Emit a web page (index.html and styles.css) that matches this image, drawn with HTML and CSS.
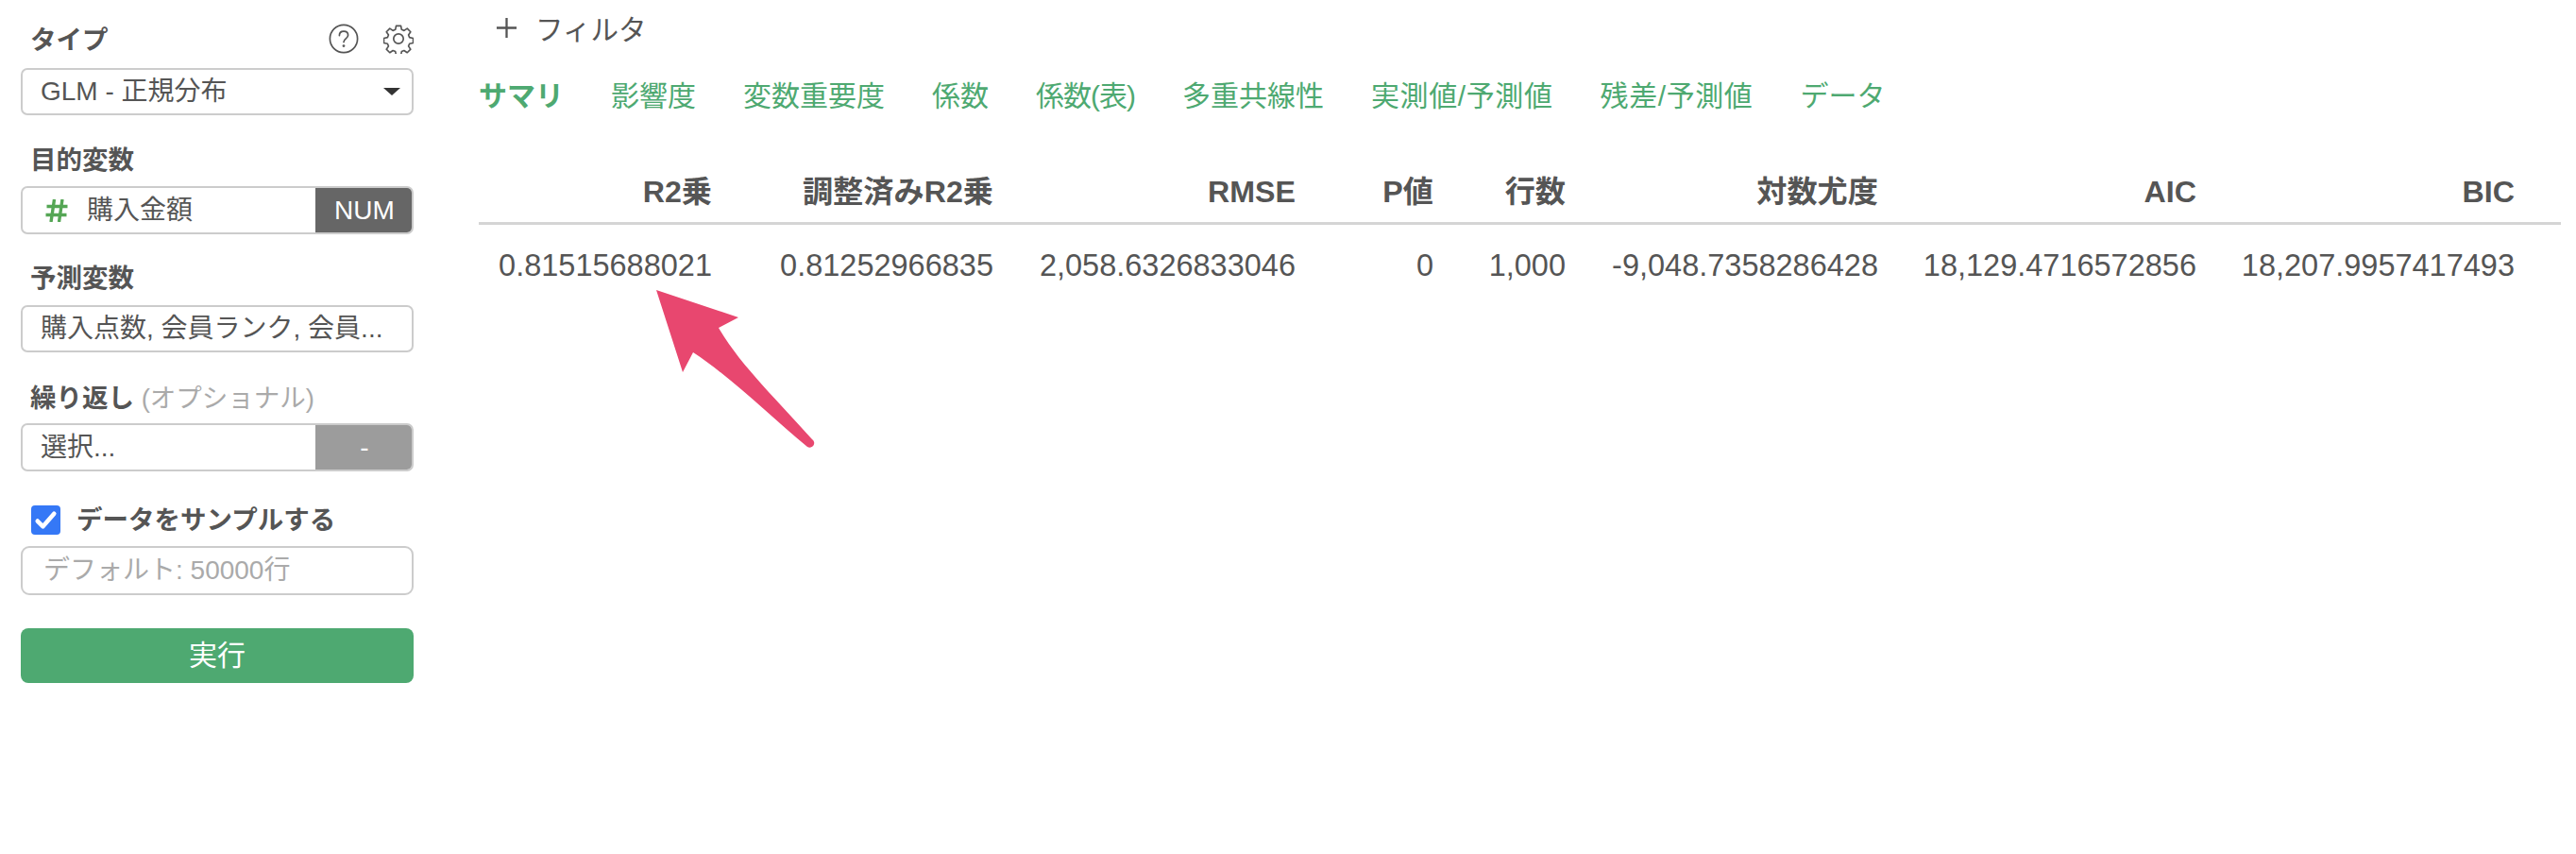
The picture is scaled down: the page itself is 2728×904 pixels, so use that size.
FILE: index.html
```html
<!DOCTYPE html>
<html lang="ja">
<head>
  <meta charset="UTF-8" />
  <title>GLM サマリ</title>
  <link rel="stylesheet" href="styles.css">
</head>
<body>

  <!-- Sidebar -->
  <aside class="sidebar">
    <div class="label-row">
      <span class="label">タイプ</span>
      <span class="tools">
        <svg class="icon" viewBox="0 0 32 32" fill="none" stroke="#555" stroke-width="1.7" stroke-linecap="round">
          <circle cx="16" cy="16" r="14.6" />
          <path d="M11.4 12.6c0-2.8 2-4.4 4.6-4.4s4.6 1.6 4.6 4c0 3.6-4.6 3.6-4.6 7.2" />
          <circle cx="16" cy="23.6" r="0.6" fill="#555" />
        </svg>
        <svg class="icon" viewBox="0 0 32 32" fill="none" stroke="#555" stroke-width="1.7" stroke-linejoin="round">
          <path d="M13.4 2h5.2l.8 4 2.7 1.1 3.4-2.3 3.7 3.7-2.3 3.4 1.1 2.7 4 .8v5.2l-4 .8-1.1 2.7 2.3 3.4-3.7 3.7-3.4-2.3-2.7 1.1-.8 4h-5.2l-.8-4-2.7-1.1-3.4 2.3-3.7-3.7 2.3-3.4-1.1-2.7-4-.8v-5.2l4-.8 1.1-2.7-2.3-3.4 3.7-3.7 3.4 2.3 2.7-1.1z" transform="translate(.5 .5) scale(.97)" />
          <circle cx="16" cy="16" r="5.2" />
        </svg>
      </span>
    </div>
    <div class="field select">
      <span class="value">GLM - 正規分布</span>
      <span class="caret"></span>
    </div>

    <div class="label target-label">目的変数</div>
    <div class="field has-badge">
      <svg class="hash" viewBox="0 0 24 24" fill="none" stroke="#55a655" stroke-width="3.4">
        <path d="M9.5 0L6 24M18 0l-3.500 24M1.500 7.500h22M0.500 16.500h22" />
      </svg>
      <span class="value">購入金額</span>
      <span class="badge">NUM</span>
    </div>

    <div class="label predict-label">予測変数</div>
    <div class="field">
      <span class="value">購入点数, 会員ランク, 会員...</span>
    </div>

    <div class="label repeat-label">繰り返し <span class="optional">(オプショナル)</span></div>
    <div class="field has-badge">
      <span class="value">選択...</span>
      <span class="badge badge-off">-</span>
    </div>

    <label class="label sample">
      <span class="checkbox">
        <svg viewBox="0 0 30 30" fill="none" stroke="#fff" stroke-width="4.4" stroke-linecap="round" stroke-linejoin="round">
          <path d="M6.5 16l5.600 5.600L23.500 8.500" />
        </svg>
      </span>
      データをサンプルする
    </label>
    <div class="field sample-input">
      <span class="placeholder">デフォルト: 50000行</span>
    </div>

    <div class="run">実行</div>
  </aside>

  <!-- Main -->
  <main class="content">
    <div class="filter">
      <svg class="plus" viewBox="0 0 24 24" stroke="#555" stroke-width="2.4">
        <path d="M12 1v22M1 12h22" />
      </svg>
      フィルタ
    </div>

    <nav class="tabs">
      <span class="tab active">サマリ</span>
      <span class="tab">影響度</span>
      <span class="tab">変数重要度</span>
      <span class="tab">係数</span>
      <span class="tab tab-tight">係数(表)</span>
      <span class="tab">多重共線性</span>
      <span class="tab tab-loose">実測値/予測値</span>
      <span class="tab tab-loose">残差/予測値</span>
      <span class="tab">データ</span>
    </nav>

    <table class="summary">
      <colgroup>
        <col class="c-r2">
        <col class="c-adj">
        <col class="c-rmse">
        <col class="c-p">
        <col class="c-rows">
        <col class="c-log">
        <col class="c-ic">
        <col class="c-ic">
        <col class="c-end">
      </colgroup>
      <thead>
        <tr>
          <th>R2乗</th>
          <th>調整済みR2乗</th>
          <th>RMSE</th>
          <th>P値</th>
          <th>行数</th>
          <th>対数尤度</th>
          <th>AIC</th>
          <th>BIC</th>
          <th></th>
        </tr>
      </thead>
      <tbody>
        <tr>
          <td>0.81515688021</td>
          <td>0.81252966835</td>
          <td>2,058.6326833046</td>
          <td>0</td>
          <td>1,000</td>
          <td>-9,048.7358286428</td>
          <td>18,129.4716572856</td>
          <td>18,207.9957417493</td>
          <td></td>
        </tr>
      </tbody>
    </table>
  </main>

  <!-- Annotation arrow -->
  <svg class="arrow" viewBox="0 0 180 180">
    <path d="M5 7L92 36 71 47C95 88 135 125 170 165a3.600 3.600 0 0 1-5 8C125 140 85 100 44 73L33 94z" fill="#e8476f" />
  </svg>

</body>
</html>
```

FILE: styles.css
```css
html, body {
  margin: 0;
  padding: 0;
  height: 100%;
  background: #fff;
}

body {
  display: flex;
  overflow: hidden;
  position: relative;
  color: #555;
  font-family: "Liberation Sans", "Noto Sans CJK JP", sans-serif;
  font-size: 28px;
}

.sidebar {
  width: 416px;
  padding: 21px 69px 0 22px;
  flex: none;
  display: flex;
  flex-direction: column;
}

.label {
  display: block;
  height: 40px;
  line-height: 43px;
  margin-left: 10px;
  font-weight: bold;
  font-size: 27.5px;
  white-space: nowrap;
}

.label-row {
  display: flex;
  justify-content: space-between;
  align-items: center;
  height: 40px;
  margin-bottom: 11px;
}

.tools {
  display: flex;
  gap: 26px;
}

.icon {
  width: 32px;
  height: 32px;
  display: block;
}

.field {
  height: 50px;
  box-sizing: border-box;
  border: 2px solid #ccc;
  border-radius: 7px;
  display: flex;
  align-items: center;
  padding-left: 19px;
  position: relative;
  overflow: hidden;
  line-height: 46px;
}

.has-badge {
  height: 51px;
}

.field .value {
  flex: 1;
  white-space: nowrap;
}

.caret {
  position: absolute;
  right: 12px;
  top: 19px;
  border-left: 9px solid transparent;
  border-right: 9px solid transparent;
  border-top: 8px solid #333;
}

.target-label {
  margin-top: 26px;
  margin-bottom: 9px;
}

.predict-label {
  margin-top: 25px;
  margin-bottom: 10px;
}

.repeat-label {
  margin-top: 27px;
  margin-bottom: 8px;
}

.optional {
  font-weight: normal;
  color: #aaa;
}

.hash {
  flex: none;
  width: 24px;
  height: 24px;
  margin: 0 20px 0 5px;
}

.badge {
  flex: none;
  width: 104px;
  height: 51px;
  margin: -2px -2px -2px 0;
  background: #666;
  color: #fff;
  line-height: 51px;
  text-align: center;
}

.badge-off {
  background: #9c9c9c;
}

.sample {
  display: flex;
  align-items: center;
  gap: 17px;
  margin-top: 31px;
  margin-bottom: 8px;
  margin-left: 11px;
}

.checkbox {
  width: 31px;
  height: 31px;
  border-radius: 4px;
  background: #3578f6;
}

.checkbox svg {
  display: block;
}

.sample-input {
  height: 52px;
  padding-left: 22px;
  border-radius: 9px;
}

.placeholder {
  color: #aaa;
}

.run {
  height: 58px;
  line-height: 58px;
  margin-top: 35px;
  background: #4ea971;
  border-radius: 8px;
  color: #fff;
  font-size: 30px;
  text-align: center;
}

.content {
  flex: 1;
  min-width: 0;
  padding-right: 16px;
}

.filter {
  display: flex;
  align-items: center;
  gap: 19px;
  height: 40px;
  margin-top: 9px;
  padding-left: 18px;
  font-size: 29.5px;
}

.plus {
  width: 23px;
  height: 23px;
}

.tabs {
  display: flex;
  gap: 50px;
  height: 40px;
  margin-top: 33px;
  line-height: 40px;
  font-size: 30px;
  color: #4ea971;
}

.tab.active {
  font-weight: bold;
}

.tab-tight {
  letter-spacing: -1px;
}

.tab-loose {
  letter-spacing: .6px;
}

.summary {
  width: 2205px;
  table-layout: fixed;
  border-collapse: collapse;
  margin-top: 52px;
  font-size: 32.5px;
  line-height: 40px;
}

.c-r2 { width: 247px; }
.c-adj { width: 298px; }
.c-rmse { width: 320px; }
.c-p { width: 146px; }
.c-rows { width: 140px; }
.c-log { width: 331px; }
.c-ic { width: 337px; }
.c-end { width: 49px; }

.summary th,
.summary td {
  padding: 0;
  text-align: right;
  white-space: nowrap;
}

.summary th {
  height: 62px;
  padding-bottom: 3px;
  box-sizing: border-box;
  border-bottom: 3px solid #d5d5d5;
  font-size: 32.2px;
}

.summary td {
  height: 86px;
}

.arrow {
  position: absolute;
  left: 690px;
  top: 300px;
  width: 180px;
  height: 180px;
}
```
